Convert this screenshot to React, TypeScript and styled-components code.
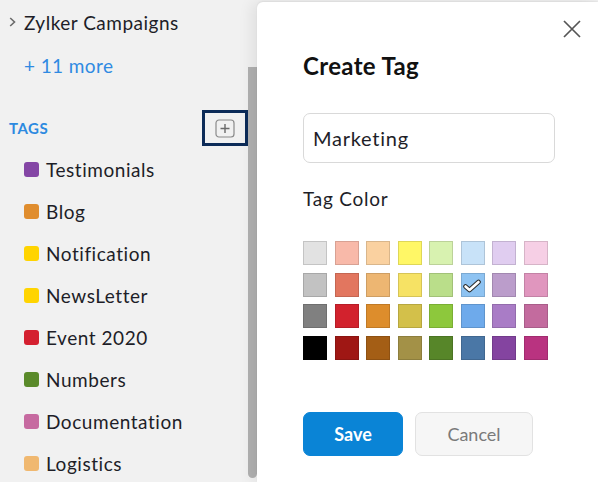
import React from "react";
import styled, { createGlobalStyle } from "styled-components";

const Global = createGlobalStyle`
  html, body { margin: 0; padding: 0; }
  body {
    font-family: Lato, "Open Sans", Arial, sans-serif;
    background: #f1f1f1;
    width: 598px;
    height: 482px;
    overflow: hidden;
  }
  * { box-sizing: border-box; }
`;

const Page = styled.div`
  display: flex;
  width: 598px;
  height: 482px;
  background: #f1f1f1;
  overflow: hidden;
`;

const Sidebar = styled.aside`
  width: 257px;
  flex: none;
  display: flex;
  height: 482px;
`;

const SideContent = styled.div`
  flex: 1;
  display: flex;
  flex-direction: column;
  padding-top: 1px;
  overflow: hidden;

  & > * {
    flex-shrink: 0;
  }
`;

const Track = styled.div`
  width: 9px;
  flex: none;
  display: flex;
  flex-direction: column;
  padding: 67px 0 4px;
`;

const Thumb = styled.div`
  flex: 1;
  background: #b1b1b1;
  border-radius: 0 0 5px 5px;
`;

const FolderRow = styled.div`
  height: 42px;
  display: flex;
  align-items: center;
  padding-left: 9px;
  font-size: 19px;
  letter-spacing: 0.5px;
  color: #1e1e28;
`;

const Chevron = styled.svg`
  width: 7px;
  height: 10px;
  margin-right: 8px;
  flex: none;
`;

const MoreLink = styled.div`
  margin-top: 1px;
  height: 42px;
  display: flex;
  align-items: center;
  padding-left: 24px;
  font-size: 19px;
  letter-spacing: 0.4px;
  color: #2f8ae2;
`;

const TagsHeader = styled.div`
  margin-top: 20px;
  height: 42px;
  display: flex;
  align-items: center;
  justify-content: space-between;
  padding-left: 9px;
`;

const TagsTitle = styled.span`
  font-size: 15px;
  font-weight: 700;
  color: #2d8ae0;
  letter-spacing: 0.5px;
  margin-top: 2px;
`;

const AddFocus = styled.button`
  width: 46px;
  height: 36px;
  border: 3px solid #0c2b58;
  background: transparent;
  padding: 0;
  display: flex;
  align-items: center;
  justify-content: center;
  margin-top: 2px;
`;

const AddIcon = styled.svg`
  width: 20px;
  height: 19px;
`;

const TagList = styled.div`
  display: flex;
  flex-direction: column;
`;

const TagRow = styled.div`
  height: 42px;
  flex: none;
  display: flex;
  align-items: center;
  padding-left: 24px;
  font-size: 19px;
  letter-spacing: 0.55px;
  color: #1e1e28;
`;

const TagDot = styled.span<{ $c: string }>`
  width: 15px;
  height: 15px;
  border-radius: 3px;
  background: ${(p) => p.$c};
  margin-right: 7px;
  flex: none;
`;

const Panel = styled.section`
  flex: 1;
  margin-top: 2px;
  background: #fff;
  border-top-left-radius: 6px;
  box-shadow: -6px 0 14px rgba(0, 0, 0, 0.07), 0 -1px 2px rgba(0, 0, 0, 0.06);
  display: flex;
  flex-direction: column;
  padding-left: 46px;
  position: relative;
  z-index: 1;
`;

const CloseRow = styled.div`
  display: flex;
  justify-content: flex-end;
  padding: 17px 16px 0 0;
`;

const CloseBtn = styled.svg`
  width: 20px;
  height: 20px;
`;

const Title = styled.h2`
  margin: 13px 0 0;
  font-size: 24px;
  line-height: 28px;
  font-weight: 700;
  letter-spacing: 0.35px;
  color: #111;
`;

const NameInput = styled.div`
  margin-top: 33px;
  width: 252px;
  height: 50px;
  border: 1px solid #d9d9d9;
  border-radius: 7px;
  display: flex;
  align-items: center;
  padding-left: 9px;
  font-size: 20px;
  letter-spacing: 0.75px;
  color: #1e1e28;
`;

const Label = styled.div`
  margin-top: 24px;
  font-size: 19px;
  line-height: 24px;
  letter-spacing: 0.75px;
  color: #1e1e28;
`;

const Swatches = styled.div`
  margin-top: 30px;
  display: grid;
  grid-template-columns: repeat(8, 24px);
  grid-auto-rows: 24px;
  gap: 7.5px;
`;

const Swatch = styled.div<{ $c: string }>`
  background: ${(p) => p.$c};
  border: 1px solid rgba(0, 0, 0, 0.13);
  display: flex;
  align-items: center;
  justify-content: center;
`;

const Check = styled.svg`
  width: 18px;
  height: 14px;
  margin: 2px 2px 0 0;
`;

const Actions = styled.div`
  margin-top: 52px;
  display: flex;
  gap: 12px;
`;

const Button = styled.button<{ $primary?: boolean }>`
  height: 44px;
  width: ${(p) => (p.$primary ? "100px" : "118px")};
  border-radius: 7px;
  font-family: Lato, "Open Sans", Arial, sans-serif;
  font-size: 18px;
  font-weight: ${(p) => (p.$primary ? 700 : 400)};
  color: ${(p) => (p.$primary ? "#fff" : "#7a7a7a")};
  background: ${(p) => (p.$primary ? "#0a84d6" : "#f6f6f6")};
  border: 1px solid ${(p) => (p.$primary ? "#0a84d6" : "#e2e2e2")};
  padding: 0;
`;

const tags = [
  { name: "Testimonials", color: "#8446a5" },
  { name: "Blog", color: "#e08d2e" },
  { name: "Notification", color: "#ffd400" },
  { name: "NewsLetter", color: "#ffd400" },
  { name: "Event 2020", color: "#d42030" },
  { name: "Numbers", color: "#5a8a2a" },
  { name: "Documentation", color: "#c66aa0" },
  { name: "Logistics", color: "#f0b870" },
];

const palette = [
  ["#e2e2e2", "#f8b9a9", "#fad1a0", "#fff766", "#d8f2b0", "#c8e2f8", "#e0cdf0", "#f6cfe5"],
  ["#c2c2c2", "#e2765f", "#edb672", "#f6e264", "#bade8a", "#8ec3f2", "#bb9dcb", "#e096be"],
  ["#808080", "#d2222d", "#dd8d2c", "#d3c04a", "#8dc83c", "#6eaaeb", "#a97cc6", "#c36b9e"],
  ["#000000", "#9f1714", "#a45e15", "#a39147", "#578629", "#4a77a6", "#8444a0", "#b93380"],
];

export default function App() {
  return (
    <>
      <Global />
      <Page>
        <Sidebar>
          <SideContent>
            <FolderRow>
              <Chevron viewBox="0 0 7 10">
                <path d="M1.2 1 L5.5 5 L1.2 9" fill="none" stroke="#6b6b6b" strokeWidth="1.6" />
              </Chevron>
              Zylker Campaigns
            </FolderRow>
            <MoreLink>+ 11 more</MoreLink>
            <TagsHeader>
              <TagsTitle>TAGS</TagsTitle>
              <AddFocus aria-label="Add tag">
                <AddIcon viewBox="0 0 20 19">
                  <rect x="1" y="1" width="18" height="17" rx="3" fill="none" stroke="#8a8a8a" strokeWidth="1.2" />
                  <path d="M10 5 V14 M5.5 9.5 H14.5" stroke="#6a6a6a" strokeWidth="1.4" />
                </AddIcon>
              </AddFocus>
            </TagsHeader>
            <TagList>
              {tags.map((t) => (
                <TagRow key={t.name}>
                  <TagDot $c={t.color} />
                  {t.name}
                </TagRow>
              ))}
            </TagList>
          </SideContent>
          <Track>
            <Thumb />
          </Track>
        </Sidebar>
        <Panel>
          <CloseRow>
            <CloseBtn viewBox="0 0 20 20">
              <path d="M2 2 L18 18 M18 2 L2 18" stroke="#555" strokeWidth="1.7" />
            </CloseBtn>
          </CloseRow>
          <Title>Create Tag</Title>
          <NameInput>Marketing</NameInput>
          <Label>Tag Color</Label>
          <Swatches>
            {palette.flatMap((row, r) =>
              row.map((c, i) => (
                <Swatch key={`${r}-${i}`} $c={c}>
                  {r === 1 && i === 5 && (
                    <Check viewBox="0 0 18 14">
                      <path d="M2.5 7.5 L6.5 11 L15.5 3" fill="none" stroke="#2a2a2a" strokeWidth="4.6" strokeLinecap="round" strokeLinejoin="round" />
                      <path d="M2.5 7.5 L6.5 11 L15.5 3" fill="none" stroke="#fff" strokeWidth="2.6" strokeLinecap="round" strokeLinejoin="round" />
                    </Check>
                  )}
                </Swatch>
              ))
            )}
          </Swatches>
          <Actions>
            <Button $primary>Save</Button>
            <Button>Cancel</Button>
          </Actions>
        </Panel>
      </Page>
    </>
  );
}
